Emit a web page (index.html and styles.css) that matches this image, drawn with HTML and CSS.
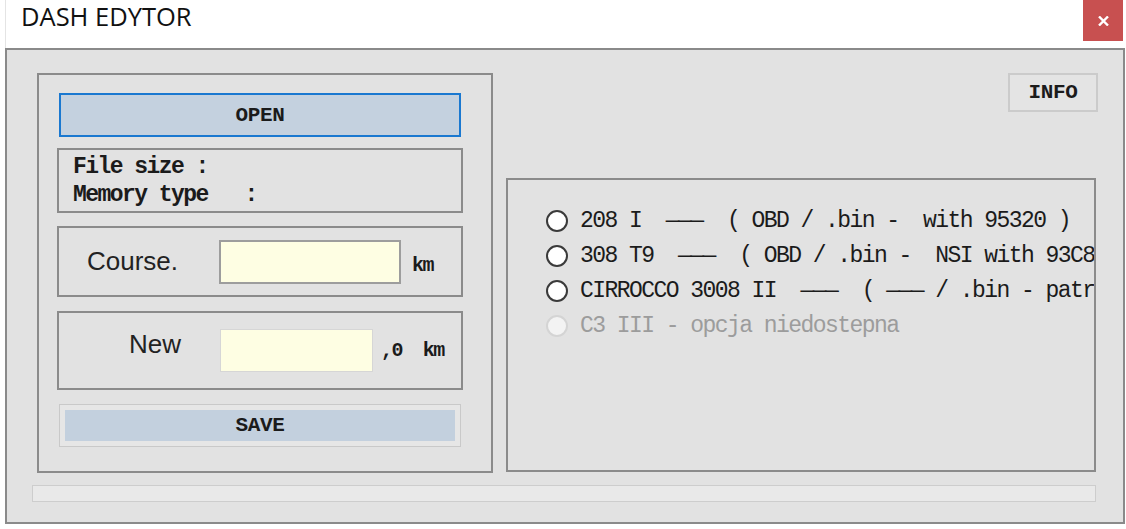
FILE: index.html
```html
<!DOCTYPE html>
<html lang="en">
<head>
    <meta charset="UTF-8">
    <meta name="viewport" content="width=device-width, initial-scale=1.0">
    <title>DASH EDYTOR</title>
    <link rel="stylesheet" href="styles.css">
</head>
<body>
    <div class="window">
        <div class="titlebar">
            <span class="title">DASH EDYTOR</span>
            <button class="close" type="button">
                <svg width="11" height="10" viewBox="0 0 11 10"><path d="M1 0.5 L10 9.5 M10 0.5 L1 9.5" stroke="#fff" stroke-width="2.4" fill="none"/></svg>
            </button>
        </div>
        <div class="client">
            <div class="main">
                <div class="group group-left">
                    <button class="btn btn-open" type="button">OPEN</button>
                    <div class="box info-box">
                        <div class="mono">File size :</div>
                        <div class="mono">Memory type   :</div>
                    </div>
                    <div class="box field field-course">
                        <label class="field-label">Course.</label>
                        <input class="field-input" type="text">
                        <span class="mono unit">km</span>
                    </div>
                    <div class="box field field-new">
                        <label class="field-label">New</label>
                        <input class="field-input" type="text">
                        <span class="mono unit">,0  km</span>
                    </div>
                    <button class="btn btn-save" type="button">SAVE</button>
                </div>
                <div class="side">
                    <button class="btn btn-info" type="button">INFO</button>
                    <div class="group group-models">
                        <div class="model"><span class="radio"></span><span class="mono">208 I  ———  ( OBD / .bin -  with 95320 )</span></div>
                        <div class="model"><span class="radio"></span><span class="mono">308 T9  ———  ( OBD / .bin -  NSI with 93C8</span></div>
                        <div class="model"><span class="radio"></span><span class="mono">CIRROCCO 3008 II  ———  ( ——— / .bin - patr</span></div>
                        <div class="model disabled"><span class="radio"></span><span class="mono">C3 III - opcja niedostepna</span></div>
                    </div>
                </div>
            </div>
            <div class="progress"></div>
        </div>
    </div>
</body>
</html>
```
FILE: styles.css
```css
*{margin:0; padding:0; box-sizing:border-box}
body{background:#fff; font-family:"Liberation Sans", Arial, sans-serif; color:#1c1c1c}

.window{margin-left:5px; width:1120px}
.titlebar{height:48px; display:flex; justify-content:space-between; align-items:flex-start; border-left:1px solid #e4e4e4}
.title{font-family:"Open Sans", sans-serif; font-size:25.5px; line-height:32px; padding-left:15px; color:#111}
.close{width:40px; height:41px; margin-right:2px; border:0; background:#c85050; display:flex; align-items:center; justify-content:center}

.client{height:476px; border:2px solid #8a8a8a; background:#e2e2e2; padding:23px 25px 0 25px}
.main{display:flex; gap:13px; height:400px}
.progress{margin-top:12px; margin-right:2px; height:17px; border:1px solid #cdcdcd; background:#e9e9e9}

/* mono text (labels, buttons, model list) */
.mono{font-family:"Liberation Mono", "Courier New", monospace; font-size:23px; letter-spacing:-1.55px; white-space:pre; color:#1b1b1b}

.group{border:2px solid #8b8b8b}
.group-left{flex-shrink:0; margin-left:5px; width:456px; padding:18px 0 0 18px}

.btn{display:block; font-family:"Liberation Mono", "Courier New", monospace; font-weight:bold; font-size:21px; letter-spacing:-0.3px; color:#1b1b1b; cursor:default}
.btn-open{width:402px; height:44px; margin-left:2px; border:2px solid #1a78d0; background:#c4d1df}
.btn-save{width:402px; height:43px; margin-left:2px; margin-top:14px; border:1px solid #c9c9c9; background:#c3d0de; box-shadow:inset 0 0 0 5px #e6e6e6}
.btn-info{align-self:flex-end; width:90px; height:39px; border:2px solid #cbcbcb; background:#e4e4e4}

.box{width:406px; border:2px solid #8b8b8b}
.info-box{margin-top:11px; height:65px; padding:3px 0 0 14px}
.info-box .mono{font-weight:bold; line-height:28px}

.field{display:flex; align-items:center}
.field-label{font-size:26px; color:#222}
.field-input{border:2px solid #9d9d9d; background:#fefee3; outline:none}
.unit{font-weight:bold; font-size:20px}

.field-course{margin-top:13px; height:71px; padding-left:28px}
.field-course .field-label{width:132px}
.field-course .field-input{width:182px; height:44px}
.field-course .unit{margin-left:11px; margin-top:8px}

.field-new{margin-top:14px; height:79px; padding-left:70px}
.field-new .field-label{width:91px; padding-bottom:12px}
.field-new .field-input{width:153px; height:43px; border:1px solid #d6d6d6}
.field-new .unit{margin-left:8px}

.side{flex:1; min-width:0; display:flex; flex-direction:column}
.group-models{flex:1; margin-top:66px; margin-right:2px; margin-bottom:1px; padding:23px 0 0 38px; overflow:hidden}
.model{height:35px; display:flex; align-items:center; white-space:nowrap}
.radio{width:22px; height:22px; flex-shrink:0; margin-right:12px; border-radius:50%; border:2px solid #3a3a3a; background:#fff}
.model.disabled .mono{color:#9c9c9c}
.model.disabled .radio{border-color:#d4d4d4; background:#f3f3f3}
```
